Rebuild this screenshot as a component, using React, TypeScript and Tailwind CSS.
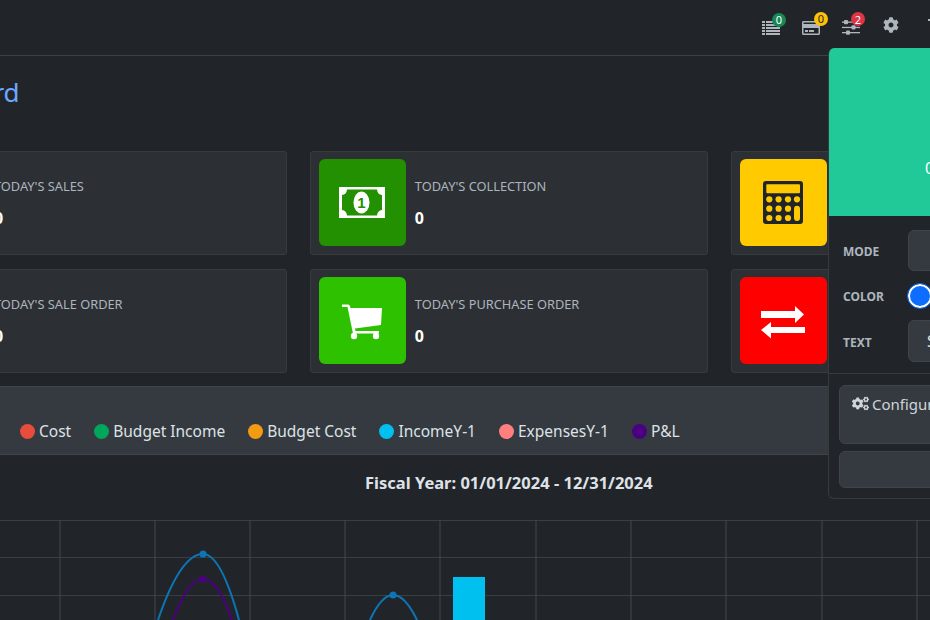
import { FaCog, FaCogs, FaRegCreditCard } from "react-icons/fa";

function Calculator() {
  return (
    <svg width="40" height="43" viewBox="0 0 40 43">
      <rect x="0" y="0" width="40" height="43" rx="3" fill="#212529" />
      <rect x="3.3" y="3.3" width="33.7" height="9" rx="1" fill="#ffcb00" />
      {[18.3, 27.7, 37].map((y) =>
        [6.3, 15.6, 25, 34].map((x) =>
          x === 34 && y !== 18.3 ? null : <circle key={`${x}-${y}`} cx={x} cy={y} r="3.1" fill="#ffcb00" />
        )
      )}
      <rect x="31" y="24.7" width="6" height="15.3" rx="3" fill="#ffcb00" />
    </svg>
  );
}

function Money() {
  return (
    <svg width="46" height="31" viewBox="0 0 46 31">
      <rect x="0" y="0" width="46" height="31" fill="#fff" />
      <path d="M8 2.5 H38 Q38.5 7.5 43 8 V23 Q38.5 23.5 38 28.5 H8 Q7.5 23.5 3 23 V8 Q7.5 7.5 8 2.5 Z" fill="#229000" />
      <ellipse cx="22.5" cy="15.5" rx="8" ry="11" fill="#fff" />
      <text x="22.5" y="21" textAnchor="middle" fontSize="15" fontWeight="700" fill="#229000" fontFamily="Liberation Sans, sans-serif">1</text>
    </svg>
  );
}

function Cart() {
  return (
    <svg className="mt-[3px]" width="40" height="36" viewBox="0 0 40 36" fill="#fff">
      <path d="M0 0.5 H6 Q7.5 0.5 8 2 L8.5 4 H40 L39 21 L13 24.5 L13.5 27 H37 V29.5 H11 L5.5 3 H0 Z" />
      <circle cx="12" cy="32" r="3.2" />
      <circle cx="34" cy="32" r="3.2" />
    </svg>
  );
}

function Exchange() {
  return (
    <svg className="mt-[3px]" width="44" height="33" viewBox="0 0 44 33" fill="#fff">
      <path d="M0 5 H34 V0 L43 8.5 L34 17 V12 H0 Z" />
      <path d="M44 21 H10 V16 L0 24 L10 32.5 V27 H44 Z" />
    </svg>
  );
}

function ListIcon() {
  return (
    <svg width="18" height="14" viewBox="0 0 18 14" fill="#adb5bd">
      {[0, 3, 6, 9, 12].map((y) => (
        <g key={y}>
          <rect x="0" y={y} width="3" height="2" />
          <rect x="4" y={y} width="14" height="2" />
        </g>
      ))}
    </svg>
  );
}

function SlidersIcon() {
  return (
    <svg width="18" height="15" viewBox="0 0 18 15" fill="#adb5bd">
      <rect x="0" y="1.5" width="18" height="1.3" />
      <rect x="0" y="6.8" width="18" height="1.3" />
      <rect x="0" y="12" width="18" height="1.3" />
      <rect x="2" y="0" width="4" height="4.3" rx="1" />
      <rect x="9.5" y="5.2" width="4" height="4.3" rx="1" />
      <rect x="4" y="10.5" width="4" height="4.3" rx="1" />
    </svg>
  );
}

function Card({ bg, icon, label, value }: { bg: string; icon?: React.ReactNode; label: string; value: string }) {
  return (
    <div className="h-[104px] flex items-center gap-[9px] pt-[7px] pb-2 px-2 bg-[#2c3034] border border-[#373b3e] rounded-[3px]">
      <div className={`w-[87px] h-[87px] shrink-0 rounded-[6px] flex items-center justify-center ${bg}`}>{icon}</div>
      <div className="flex flex-col pt-[2px]">
        <span className="text-[12.8px] leading-[18px] text-[#adb5bd]">{label}</span>
        <span className="mt-[11px] text-[16px] leading-[24px] font-bold text-white">{value}</span>
      </div>
    </div>
  );
}

function Legend({ color, label }: { color: string; label: string }) {
  return (
    <div className="flex items-center gap-[4px]">
      <span className={`w-[15px] h-[15px] rounded-full ${color}`} />
      <span className="text-[15.5px] text-[#dee2e6]">{label}</span>
    </div>
  );
}

function Badge({ color, n, dark, left }: { color: string; n: number; dark?: boolean; left: string }) {
  return (
    <span className={`absolute -top-[8px] ${left} w-[14px] h-[14px] rounded-full flex items-center justify-center text-[11px] leading-none ${color} ${dark ? "text-[#212529]" : "text-white"}`}>
      {n}
    </span>
  );
}

export default function App() {
  const xs = [60, 155, 250, 345, 440, 536, 631, 726, 822, 917];
  const ys = [520, 557, 595];
  return (
    <div className="relative w-[930px] h-[620px] overflow-hidden bg-[#212529] font-['Noto_Sans',sans-serif]">
      <header className="h-[56px] border-b border-[#3c4044] flex items-center justify-end gap-[21px] text-[#adb5bd]">
        <div className="relative flex mr-[1px]"><ListIcon /><Badge color="bg-[#198754]" n={0} left="left-[10px]" /></div>
        <div className="relative flex mr-[1px]"><FaRegCreditCard className="w-[18px] h-[16px]" /><Badge color="bg-[#ffc107]" n={0} dark left="left-[12px]" /></div>
        <div className="relative flex mr-[2px]"><SlidersIcon /><Badge color="bg-[#dc3545]" n={2} left="left-[9px]" /></div>
        <div className="flex mb-[5px] mr-[8px]"><FaCog size={16} /></div>
        <span className="w-[2px] h-[2px] mb-[16px] bg-[#adb5bd]" />
      </header>

      <div className="-ml-[111px] w-[1239.5px]">
        <h1 className="h-[95px] pt-[16px] -ml-[4px] text-[26px] leading-[40px] text-[#6ea8fe]">Dashboard</h1>

        <div className="grid grid-cols-3 gap-x-[23px] gap-y-[14px]">
          <Card bg="bg-[#2c3034]" label="TODAY'S SALES" value="0" />
          <Card bg="bg-[#229000]" icon={<Money />} label="TODAY'S COLLECTION" value="0" />
          <Card bg="bg-[#ffcb00]" icon={<Calculator />} label="" value="" />
          <Card bg="bg-[#2c3034]" label="TODAY'S SALE ORDER" value="0" />
          <Card bg="bg-[#2dc100]" icon={<Cart />} label="TODAY'S PURCHASE ORDER" value="0" />
          <Card bg="bg-[#ff0000]" icon={<Exchange />} label="" value="" />
        </div>

        <div className="mt-[13px] h-[69px] bg-[#343a40] border-y border-[#3f444a] flex items-end gap-[23px] pl-[131px] pb-[11px]">
          <Legend color="bg-[#e74c3c]" label="Cost" />
          <Legend color="bg-[#00a65a]" label="Budget Income" />
          <Legend color="bg-[#f39c12]" label="Budget Cost" />
          <Legend color="bg-[#00c0ef]" label="IncomeY-1" />
          <Legend color="bg-[#ff7f7f]" label="ExpensesY-1" />
          <Legend color="bg-[#4b0082]" label="P&L" />
        </div>

        <p className="mt-[16px] pl-[476px] text-[16.5px] leading-[24px] font-bold text-[#dee2e6]">Fiscal Year: 01/01/2024 - 12/31/2024</p>
      </div>

      <svg className="absolute left-0 top-0 pointer-events-none" width="930" height="620" viewBox="0 0 930 620">
        {ys.map((y) => <line key={y} x1="0" x2="930" y1={y + 0.5} y2={y + 0.5} stroke="#3a3e42" strokeWidth="1" />)}
        {xs.map((x) => <line key={x} x1={x} x2={x} y1="520" y2="620" stroke="#44484c" strokeWidth="1" />)}
        <rect x="453" y="577" width="32" height="43" fill="#00c0ef" />
        <path d="M158 620 Q180.5 554 203 554 Q221 554 239 620" fill="none" stroke="#0b75b5" strokeWidth="2" />
        <path d="M173 620 Q188 579 203 579 Q217.5 579 232 620" fill="none" stroke="#4b0082" strokeWidth="2" />
        <path d="M370 620 Q381.5 595 393 595 Q405 595 417 620" fill="none" stroke="#0b75b5" strokeWidth="2" />
        <circle cx="203" cy="554" r="3.5" fill="#0b75b5" />
        <circle cx="203" cy="579" r="3.5" fill="#4b0082" />
        <circle cx="393" cy="595" r="3.5" fill="#0b75b5" />
      </svg>

      <aside className="absolute left-[828px] top-[48px] w-[300px] h-[451px] flex flex-col bg-[#212529] border border-t-0 border-[#373b3e] rounded-l-[6px] overflow-hidden">
        <div className="h-[168px] shrink-0 bg-[#20c997] pl-[96px] pt-[108px] text-[16px] leading-[24px] text-white">0</div>
        <div className="flex flex-col h-[158px] border-b border-[#373b3e]">
          <div className="flex items-center pl-[14px] mt-[14px] h-[41px]">
            <span className="w-[65px] mt-[2px] text-[12px] font-bold text-[#adb5bd]">MODE</span>
            <div className="h-[41px] w-[200px] rounded-[6px] bg-[#343a40] border border-[#3f444a]" />
          </div>
          <div className="flex items-center pl-[14px] mt-[10px] h-[30px]">
            <span className="w-[65px] mt-[2px] text-[12px] font-bold text-[#adb5bd]">COLOR</span>
            <span className="w-[24px] h-[24px] rounded-full bg-[#0d6efd] border-2 border-white outline outline-1 outline-[#0d6efd]" />
          </div>
          <div className="flex items-center pl-[14px] mt-[9px] h-[42px]">
            <span className="w-[65px] mt-[4px] text-[12px] font-bold text-[#adb5bd]">TEXT</span>
            <div className="h-[42px] w-[200px] rounded-[6px] bg-[#343a40] border border-[#3f444a] pl-[18px] flex items-center text-[#dee2e6] text-[16px]">Select</div>
          </div>
        </div>
        <div className="px-[10px] pt-[11px]">
          <div className="h-[59px] rounded-[6px] bg-[#343a40] border border-[#3f444a] pl-[12px] pt-[6px] flex items-start gap-[3px] text-[#ced4da]">
            <FaCogs size={17} className="mt-[3px]" />
            <span className="text-[15px] leading-[24px] whitespace-nowrap">Configuration</span>
          </div>
          <div className="mt-[7px] h-[37px] rounded-[6px] bg-[#343a40] border border-[#3f444a]" />
        </div>
      </aside>
    </div>
  );
}
